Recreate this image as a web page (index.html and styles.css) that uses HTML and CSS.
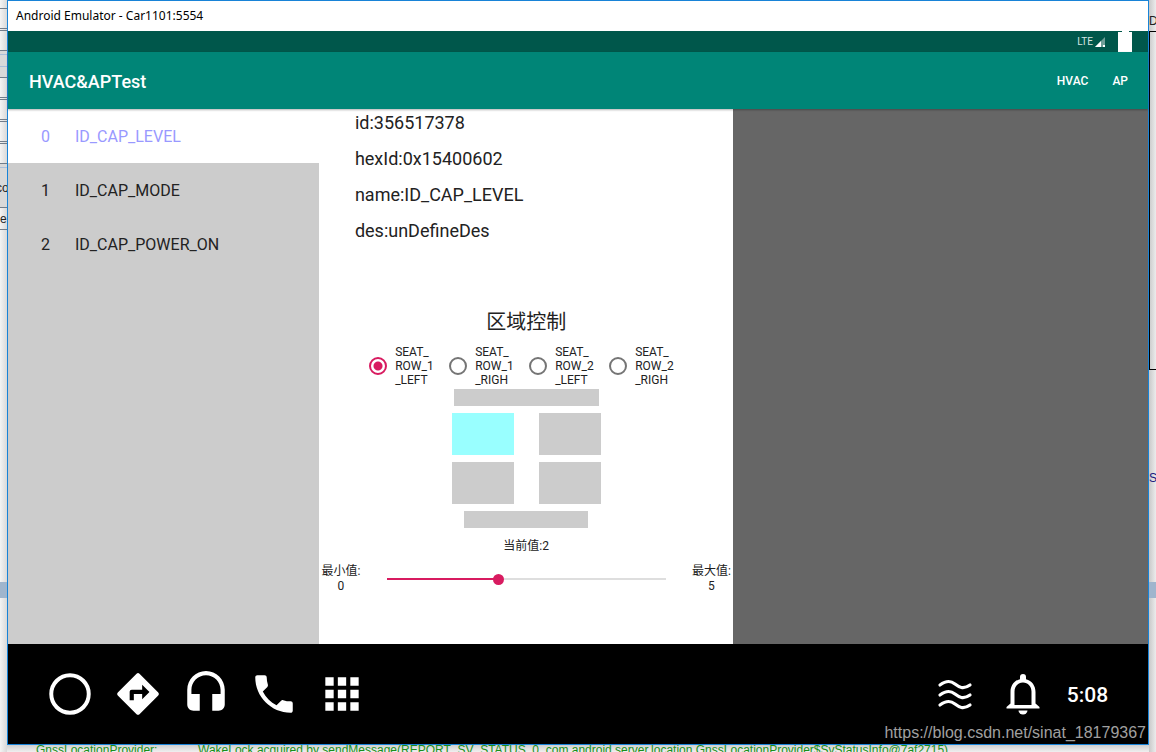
FILE: index.html
```html
<!DOCTYPE html>
<html lang="zh-CN">
<head>
<meta charset="utf-8">
<title>Android Emulator - Car1101:5554</title>
<link rel="stylesheet" href="styles.css">
</head>
<body>
<div class="desktop">
  <div class="strip strip-left">
    <svg class="strip-art" width="7" height="752" viewBox="0 0 7 752" aria-hidden="true">
      <path class="band" d="M0 51h7v26H0zM0 164h7v44H0z"/>
      <path class="rule" d="M0 8.500h7M0 28.500h7M0 30.500h7M0 50.500h7M0 77.500h7M0 97.500h7M0 99.500h7M0 119.500h7M0 121.500h7M0 141.500h7M0 143.500h7M0 163.500h7M0 207.500h7M0 229.500h7"/>
      <path class="rule-blue" d="M0 54.500h7M0 66.500h7M0 167.500h7"/>
      <path class="selection" d="M0 582h7v16H0z"/>
    </svg>
    <span class="peek peek-co">co</span>
    <span class="peek peek-e">e</span>
  </div>

  <main class="window">
    <header class="titlebar">Android Emulator - Car1101:5554</header>

    <div class="statusbar">
      <span>LTE</span>
      <svg class="signal" width="12" height="12" viewBox="0 0 12 12" aria-hidden="true">
        <path d="M11 1v10H1z" fill="#6f9f98"/>
        <path d="M7 5v6H1z" fill="#fff"/>
        <path d="M9 9h2v2H9z" fill="#fff"/>
      </svg>
      <svg class="battery" width="15" height="21" viewBox="0 0 15 21" aria-hidden="true">
        <path d="M4 0h7v1h3v20H0V1h4z" fill="#fff"/>
      </svg>
    </div>

    <div class="appbar">
      <h1 class="app-title">HVAC&amp;APTest</h1>
      <button class="action" type="button">HVAC</button>
      <button class="action" type="button">AP</button>
    </div>

    <div class="content">
      <ul class="list">
        <li><button class="item selected" type="button"><span class="index">0</span><span>ID_CAP_LEVEL</span></button></li>
        <li><button class="item" type="button"><span class="index">1</span><span>ID_CAP_MODE</span></button></li>
        <li><button class="item" type="button"><span class="index">2</span><span>ID_CAP_POWER_ON</span></button></li>
      </ul>

      <section class="detail">
        <div class="info">
          <p>id:356517378</p>
          <p>hexId:0x15400602</p>
          <p>name:ID_CAP_LEVEL</p>
          <p>des:unDefineDes</p>
        </div>

        <h2 class="zone-title">区域控制</h2>
        <div class="zones" role="radiogroup" aria-label="区域控制">
          <label class="zone"><input type="radio" name="zone" checked><span>SEAT_<br>ROW_1<br>_LEFT</span></label>
          <label class="zone"><input type="radio" name="zone"><span>SEAT_<br>ROW_1<br>_RIGH</span></label>
          <label class="zone"><input type="radio" name="zone"><span>SEAT_<br>ROW_2<br>_LEFT</span></label>
          <label class="zone"><input type="radio" name="zone"><span>SEAT_<br>ROW_2<br>_RIGH</span></label>
        </div>

        <div class="car">
          <div class="bumper front"></div>
          <div class="seats">
            <div class="seat active"></div>
            <div class="seat"></div>
            <div class="seat"></div>
            <div class="seat"></div>
          </div>
          <div class="bumper rear"></div>
        </div>

        <label class="current" for="level">当前值:2</label>
        <div class="slider-row">
          <span class="bound">最小值:<br>0</span>
          <input class="slider" id="level" type="range" min="0" max="5" value="2" style="--fill: 40%">
          <span class="bound">最大值:<br>5</span>
        </div>
      </section>

      <div class="empty"></div>
    </div>

    <nav class="navbar">
      <button class="nav" type="button" aria-label="Home">
        <svg viewBox="0 0 24 24"><circle cx="12" cy="12" r="9" fill="none" stroke="#fff" stroke-width="1.900"/></svg>
      </button>
      <button class="nav" type="button" aria-label="Navigation">
        <svg viewBox="0 0 24 24"><path d="M21.710 11.290l-9-9a.996.996 0 0 0-1.410 0l-9 9a.996.996 0 0 0 0 1.410l9 9c.390.390 1.020.390 1.410 0l9-9a.996.996 0 0 0 0-1.410zM14 14.500V12h-4v3H8v-4c0-.550.450-1 1-1h5V7.500l3.500 3.500-3.500 3.500z"/></svg>
      </button>
      <button class="nav" type="button" aria-label="Media">
        <svg viewBox="0 0 24 24"><path d="M12 1c-4.970 0-9 4.030-9 9v7c0 1.660 1.340 3 3 3h3v-8H5v-2c0-3.870 3.130-7 7-7s7 3.130 7 7v2h-4v8h3c1.660 0 3-1.340 3-3v-7c0-4.970-4.030-9-9-9z"/></svg>
      </button>
      <button class="nav" type="button" aria-label="Phone">
        <svg viewBox="0 0 24 24"><path d="M6.620 10.790c1.440 2.830 3.760 5.140 6.590 6.590l2.200-2.200c.270-.270.670-.360 1.020-.240 1.120.370 2.330.570 3.570.570.550 0 1 .450 1 1V20c0 .550-.450 1-1 1-9.390 0-17-7.610-17-17 0-.550.450-1 1-1h3.500c.550 0 1 .450 1 1 0 1.250.200 2.450.570 3.570.110.350.030.740-.250 1.020l-2.200 2.200z"/></svg>
      </button>
      <button class="nav" type="button" aria-label="Apps">
        <svg viewBox="0 0 24 24"><path d="M4 8h4V4H4v4zm6 12h4v-4h-4v4zm-6 0h4v-4H4v4zm0-6h4v-4H4v4zm6 0h4v-4h-4v4zm6-10v4h4V4h-4zm-6 4h4V4h-4v4zm6 6h4v-4h-4v4zm0 6h4v-4h-4v4z"/></svg>
      </button>
      <span class="spacer"></span>
      <button class="nav" type="button" aria-label="Climate">
        <svg viewBox="0 0 50 50"><path d="M10 16c7-5 11-4 15-1s8 6 15 1M10 26c7-5 11-4 15-1s8 6 15 1M10 36c7-5 11-4 15-1s8 6 15 1" fill="none" stroke="#fff" stroke-width="3.200" stroke-linecap="round"/></svg>
      </button>
      <button class="nav" type="button" aria-label="Notifications">
        <svg viewBox="0 0 50 50"><path d="M20.500 41.500h9a4.500 4 0 0 1-9 0z"/><path fill-rule="evenodd" d="M25 5a3 3 0 0 1 3 3v2.200c6 1.500 9.500 6.500 9.500 12.800v11.500l4 3.500v1.500H8.500V38l4-3.500V23c0-6.300 3.500-11.300 9.500-12.800V8a3 3 0 0 1 3-3zM25 13.500c-5 0-8.500 4-8.500 9V36h17V22.500c0-5-3.500-9-8.500-9z"/></svg>
      </button>
      <time class="clock">5:08</time>
    </nav>
  </main>

  <div class="strip strip-right">
    <svg class="strip-art" width="7" height="752" viewBox="0 0 7 752" aria-hidden="true">
      <path d="M1 31.500h6M.5 31v339M1 369.500h6" fill="none" stroke="#000"/>
      <path class="selection" d="M0 582h7v16H0z"/>
    </svg>
    <span class="peek peek-d">D</span>
    <span class="peek peek-s">S</span>
  </div>

  <footer class="log"><span class="log-tag">GnssLocationProvider:</span><span>WakeLock acquired by sendMessage(REPORT_SV_STATUS, 0, com.android.server.location.GnssLocationProvider$SvStatusInfo@7af2715)</span></footer>
  <span class="watermark">https://blog.csdn.net/sinat_18179367</span>
</div>
</body>
</html>
```
FILE: styles.css
```css
* {
  box-sizing: border-box;
}

body {
  margin: 0;
  font-family: Roboto, "Noto Sans CJK SC", sans-serif;
  color: #222;
}

h1, h2, p, ul {
  margin: 0;
  padding: 0;
  font-weight: 400;
}

ul {
  list-style: none;
}

button {
  border: 0;
  padding: 0;
  background: none;
  color: inherit;
  font: inherit;
}

.desktop {
  position: relative;
  display: grid;
  grid-template-columns: 7px minmax(0, 1fr) 7px;
  grid-template-rows: minmax(0, 1fr) 7px;
  height: 100vh;
  overflow: hidden;
  background: #efefef;
}

/* Windows partly hidden behind the emulator */
.strip {
  position: relative;
  grid-row: 1 / 3;
  overflow: hidden;
  background: linear-gradient(90deg, #f4f4f4, #d9d9d9);
}

.strip-left {
  grid-column: 1;
}

.strip-right {
  grid-column: 3;
  background: linear-gradient(90deg, #c9c9c9, #ececec);
}

.strip-art {
  display: block;
}

.band {
  fill: #d9d9d9;
}

.rule {
  stroke: #717c89;
}

.rule-blue {
  stroke: #a9bfda;
}

.selection {
  fill: #9fb5cd;
}

.peek {
  position: absolute;
  left: 0;
  font: 12px/14px "Liberation Sans", sans-serif;
}

.peek-co {
  top: 181px;
  left: -4px;
}

.peek-e {
  top: 212px;
}

.peek-d {
  top: 14px;
}

.peek-s {
  top: 471px;
  color: #1a1a80;
}

.log {
  grid-column: 2;
  grid-row: 2;
  display: flex;
  padding-left: 29px;
  overflow: hidden;
  background: linear-gradient(#cfcfcf, #efefef);
  color: #1a8f1a;
  font: 12px/10px "Liberation Sans", sans-serif;
  white-space: nowrap;
}

.log-tag {
  width: 162px;
}

.window {
  grid-column: 2;
  grid-row: 1;
  display: flex;
  flex-direction: column;
  border: 1px solid #1883d7;
  background: #fff;
}

.titlebar {
  flex: none;
  height: 30px;
  padding-left: 8px;
  color: #000;
  font: 12px/30px "Noto Sans", sans-serif;
}

.statusbar {
  flex: none;
  display: flex;
  align-items: center;
  justify-content: flex-end;
  height: 21px;
  padding-right: 15px;
  background: #00574b;
  color: #d5e5e2;
  font-size: 10px;
}

.signal {
  margin: 0 12px 0 1px;
}

.appbar {
  position: relative;
  flex: none;
  display: flex;
  align-items: center;
  gap: 24px;
  height: 57px;
  padding: 1px 20px 0 21px;
  background: #008577;
  box-shadow: 0 1px 2px rgba(0, 0, 0, 0.3);
  color: #fff;
}

.app-title {
  flex: 1;
  font-size: 18px;
  font-weight: 500;
}

.action {
  font-size: 12px;
  font-weight: 500;
}

.content {
  flex: 1;
  display: grid;
  grid-template-columns: 3fr 4fr 4fr;
  min-height: 0;
}

.list {
  background: #ccc;
}

.item {
  display: flex;
  align-items: center;
  width: 100%;
  height: 54px;
  color: #222;
  font-size: 16px;
}

.item.selected {
  background: #fff;
  color: #9999ff;
}

.index {
  width: 67px;
  padding-right: 25px;
  text-align: right;
}

.detail {
  display: flex;
  flex-direction: column;
  align-items: center;
}

.info {
  align-self: stretch;
  padding: 3px 0 0 36px;
  font-size: 18px;
}

.info p {
  height: 36px;
  line-height: 21px;
}

.zone-title {
  margin-top: 51px;
  font-size: 20px;
  line-height: 30px;
}

.zones {
  display: flex;
  margin-top: 8px;
}

.zone {
  display: flex;
  align-items: center;
  gap: 8px;
  width: 80px;
  padding-left: 3px;
  font-size: 12px;
  line-height: 14px;
}

.zone input {
  appearance: none;
  flex: none;
  width: 18px;
  height: 18px;
  margin: 0;
  border: 2px solid #757575;
  border-radius: 50%;
}

.zone input:checked {
  border-color: #d81b60;
  background: radial-gradient(circle, #d81b60 4px, transparent 5px);
}

.car {
  display: flex;
  flex-direction: column;
  align-items: center;
  gap: 7px;
  margin-top: 2px;
}

.bumper {
  height: 17px;
  background: #ccc;
}

.front {
  width: 145px;
}

.rear {
  width: 124px;
}

.seats {
  display: grid;
  grid-template-columns: 62px 62px;
  gap: 7px 25px;
}

.seat {
  height: 42px;
  background: #ccc;
}

.seat.active {
  background: #99ffff;
}

.current {
  margin-top: 11px;
  font-size: 12px;
  line-height: 15px;
}

.slider-row {
  align-self: stretch;
  display: flex;
  align-items: center;
  gap: 19px;
  margin-top: 10px;
  padding: 0 1px;
}

.bound {
  flex: none;
  width: 42px;
  font-size: 12px;
  line-height: 15px;
  text-align: center;
}

.slider {
  appearance: none;
  flex: 1;
  min-width: 0;
  height: 12px;
  margin: 0;
  background: linear-gradient(90deg, #d81b60 var(--fill), #dedede var(--fill)) center / calc(100% - 11px) 2px no-repeat;
}

.slider::-webkit-slider-thumb {
  appearance: none;
  width: 11px;
  height: 11px;
  border-radius: 50%;
  background: #d81b60;
}

.empty {
  background: #666;
}

.navbar {
  flex: none;
  display: flex;
  align-items: center;
  gap: 18px;
  height: 100px;
  padding: 0 39px 0 37px;
  background: #000;
  color: #fff;
}

.nav {
  width: 50px;
  height: 50px;
}

.nav svg {
  display: block;
  fill: #fff;
}

.spacer {
  flex: 1;
}

.clock {
  width: 43px;
  padding-top: 2px;
  font-size: 21px;
  font-weight: 500;
  text-align: center;
}

.watermark {
  position: absolute;
  right: 10px;
  bottom: 9px;
  color: #a0a0a0;
  font: 16px/20px "Liberation Sans", sans-serif;
}
```
